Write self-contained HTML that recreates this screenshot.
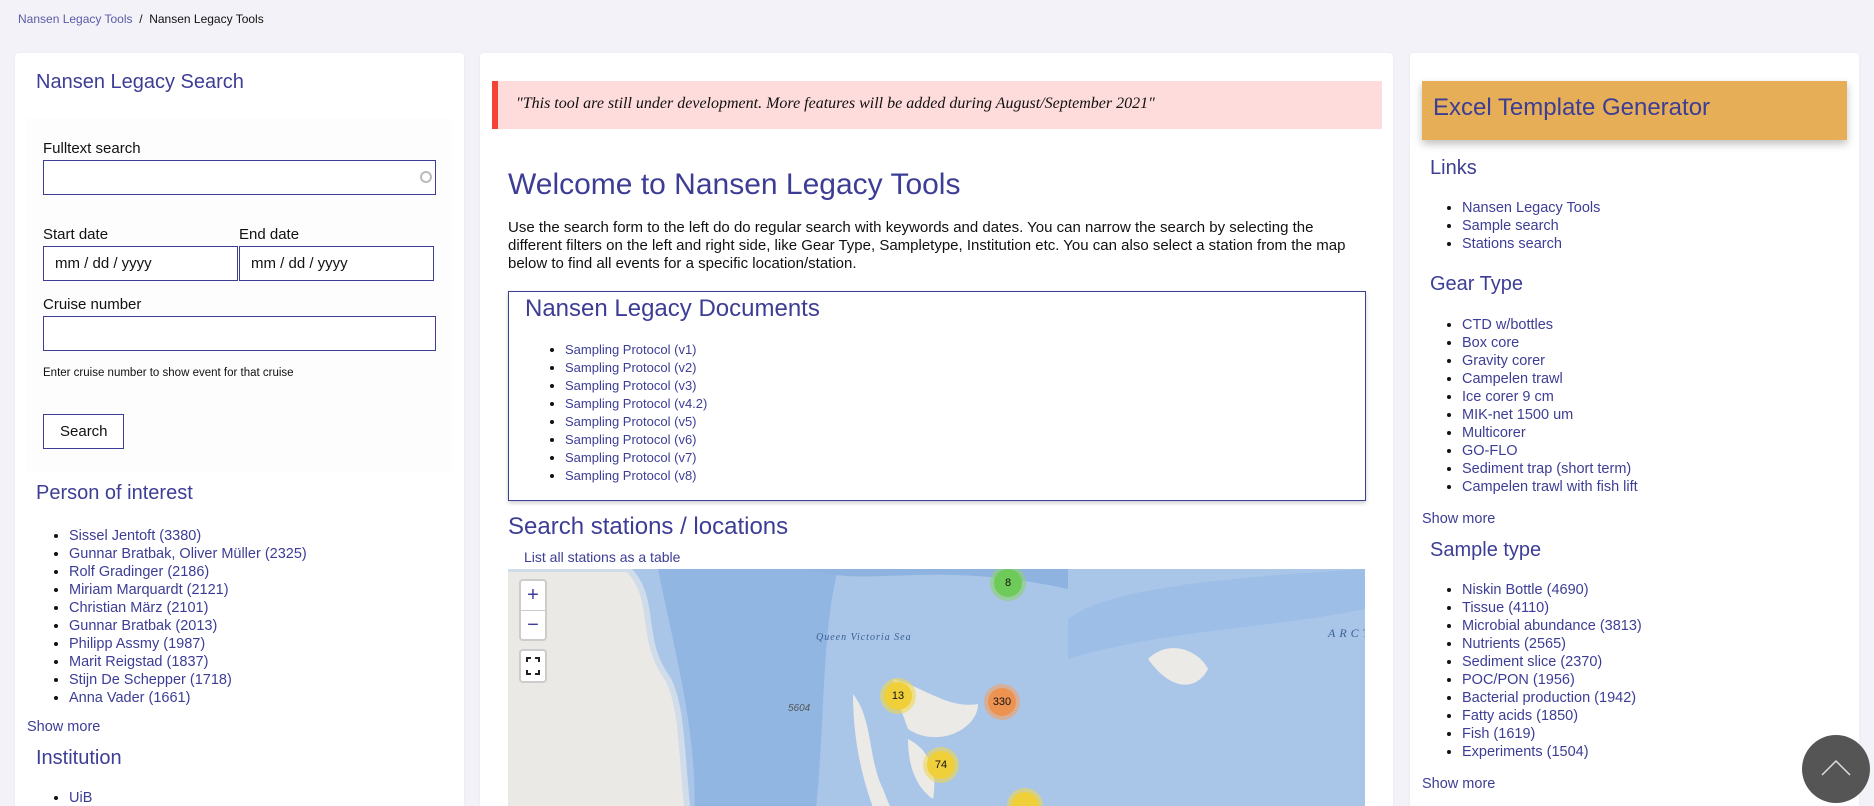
<!DOCTYPE html>
<html><head><meta charset="utf-8"><style>
*{box-sizing:border-box;margin:0;padding:0}
html,body{width:1874px;height:806px;overflow:hidden}
body{background:#f3f2f8;font-family:"Liberation Sans",sans-serif;color:#111;position:relative}
a{color:#3d3d96;text-decoration:none}
.abs{position:absolute}
.card{position:absolute;background:#fff;border-radius:4px 4px 0 0;top:53px;height:753px;overflow:hidden;box-shadow:0 0 3px rgba(0,0,0,.05)}
h2{font-weight:normal;color:#3d3d96}
ul{list-style:disc;padding-left:40px}
ul li{font-size:14.5px;line-height:18px}
.inp{position:absolute;border:1.5px solid #3d3d96;background:#fff;height:35px}
label{position:absolute;font-size:15px}
</style></head><body>
<div class="abs" style="left:18px;top:12px;font-size:12px"><a href="#" style="color:#5a5aa6">Nansen Legacy Tools</a>&nbsp;&nbsp;/&nbsp;&nbsp;<span>Nansen Legacy Tools</span></div>

<!-- left -->
<div class="card" style="left:15px;width:449px">
 <h2 class="abs" style="left:21px;top:18px;font-size:20px">Nansen Legacy Search</h2>
 <div class="abs" style="left:12px;top:65px;width:425px;height:355px;background:#fdfdfe"></div>
 <label style="left:28px;top:87px">Fulltext search</label>
 <div class="inp" style="left:28px;top:107px;width:393px"><span class="abs" style="right:3px;top:10px;width:12px;height:12px;border:2px solid #bbb;border-radius:50%"></span></div>
 <label style="left:28px;top:173px">Start date</label>
 <label style="left:224px;top:173px">End date</label>
 <div class="inp" style="left:28px;top:193px;width:195px;font-size:15px;padding:8px 11px">mm / dd / yyyy</div>
 <div class="inp" style="left:224px;top:193px;width:195px;font-size:15px;padding:8px 11px">mm / dd / yyyy</div>
 <label style="left:28px;top:243px">Cruise number</label>
 <div class="inp" style="left:28px;top:263px;width:393px"></div>
 <div class="abs" style="left:28px;top:314px;font-size:11.5px">Enter cruise number to show event for that cruise</div>
 <div class="inp" style="left:28px;top:361px;width:81px;font-size:15px;padding:8px 16px">Search</div>
 <h2 class="abs" style="left:21px;top:429px;font-size:20px">Person of interest</h2>
 <ul class="abs" style="left:14px;top:474px"><li><a>Sissel Jentoft (3380)</a></li><li><a>Gunnar Bratbak, Oliver Müller (2325)</a></li><li><a>Rolf Gradinger (2186)</a></li><li><a>Miriam Marquardt (2121)</a></li><li><a>Christian März (2101)</a></li><li><a>Gunnar Bratbak (2013)</a></li><li><a>Philipp Assmy (1987)</a></li><li><a>Marit Reigstad (1837)</a></li><li><a>Stijn De Schepper (1718)</a></li><li><a>Anna Vader (1661)</a></li></ul>
 <a class="abs" style="left:12px;top:666px;font-size:14.5px">Show more</a>
 <h2 class="abs" style="left:21px;top:694px;font-size:20px">Institution</h2>
 <ul class="abs" style="left:14px;top:736px"><li><a>UiB</a></li></ul>
</div>

<!-- center -->
<div class="card" style="left:480px;width:913px">
 <div class="abs" style="left:12px;top:28px;width:890px;height:48px;background:#fedcdb;border-left:6px solid #f44336;font-family:'Liberation Serif',serif;font-style:italic;font-size:16px;padding:14px 18px">"This tool are still under development. More features will be added during August/September 2021"</div>
 <h2 class="abs" style="left:28px;top:115px;font-size:30px">Welcome to Nansen Legacy Tools</h2>
 <p class="abs" style="left:28px;top:166px;width:860px;font-size:15px;line-height:18px">Use the search form to the left do do regular search with keywords and dates. You can narrow the search by selecting the different filters on the left and right side, like Gear Type, Sampletype, Institution etc. You can also select a station from the map below to find all events for a specific location/station.</p>
 <div class="abs" style="left:28px;top:238px;width:858px;height:210px;border:1.5px solid #3d3d96;box-shadow:0 2px 4px rgba(0,0,0,.2)">
  <h2 class="abs" style="left:16px;top:3px;font-size:24px">Nansen Legacy Documents</h2>
  <ul class="abs" style="left:16px;top:49px"><li style="font-size:13px"><a>Sampling Protocol (v1)</a></li><li style="font-size:13px"><a>Sampling Protocol (v2)</a></li><li style="font-size:13px"><a>Sampling Protocol (v3)</a></li><li style="font-size:13px"><a>Sampling Protocol (v4.2)</a></li><li style="font-size:13px"><a>Sampling Protocol (v5)</a></li><li style="font-size:13px"><a>Sampling Protocol (v6)</a></li><li style="font-size:13px"><a>Sampling Protocol (v7)</a></li><li style="font-size:13px"><a>Sampling Protocol (v8)</a></li></ul>
 </div>
 <h2 class="abs" style="left:28px;top:460px;font-size:24px">Search stations / locations</h2>
 <a class="abs" style="left:44px;top:496px;font-size:14px">List all stations as a table</a>
 <div class="abs" style="left:28px;top:516px;width:857px;height:237px;background:#a9c6e8;overflow:hidden">
  <svg width="857" height="300" style="position:absolute;left:0;top:0">
   <path d="M150 0 H330 C310 80 320 180 300 300 H180 C200 200 170 100 150 0Z" fill="#92b6e2"/>
   <path d="M0 0 H120 C150 30 130 70 160 110 C180 150 170 220 190 300 H0Z" fill="#ebe9e5"/>
   <path d="M0 0 H120 C150 30 130 70 160 110 C180 150 170 220 190 300" stroke="#d0dcea" stroke-width="6" fill="none"/>
   <path d="M345 125 C365 150 360 190 375 220 C390 260 405 280 420 300 H395 C370 260 345 200 345 125Z" fill="#eceae6"/>
   <path d="M385 110 C420 120 440 140 470 135 C470 160 430 180 400 160 C395 145 388 130 385 110Z" fill="#eceae6"/>
   <path d="M400 170 C420 180 430 200 425 230 C410 220 400 200 400 170Z" fill="#eceae6"/>
   <path d="M640 90 C660 70 690 80 700 100 C690 120 665 125 640 90Z" fill="#eceae6"/>
   <path d="M560 50 C600 20 700 10 857 0 V40 C760 60 660 60 560 90Z" fill="#9dbee6"/>
   <path d="M300 0 C360 20 420 -10 560 20 L560 0Z" fill="#8fb3e0"/>
  </svg>
  <div class="abs" style="left:308px;top:63px;font-family:'Liberation Serif',serif;font-style:italic;font-size:10px;color:#3a5f95;letter-spacing:1px">Queen Victoria Sea</div>
  <div class="abs" style="left:820px;top:57px;font-family:'Liberation Serif',serif;font-style:italic;font-size:12px;color:#3a5f95;letter-spacing:4px;white-space:nowrap">ARCT</div>
  <div class="abs" style="left:280px;top:134px;font-size:10px;font-style:italic;color:#555">5604</div>
  <div class="abs" style="left:11px;top:10px;width:28px;height:62px;background:#fff;border:2px solid rgba(0,0,0,.2);border-radius:4px;text-align:center;font-size:20px;color:#3d3d96;line-height:29px">+<div style="border-top:1px solid #ccc">−</div></div>
  <div class="abs" style="left:11px;top:80px;width:28px;height:34px;background:#fff;border:2px solid rgba(0,0,0,.2);border-radius:4px"><svg width="24" height="30"><path d="M6 11V7h4M14 7h4v4M18 19v4h-4M10 23H6v-4" stroke="#222" stroke-width="2" fill="none"/></svg></div>
  <div class="abs" style="left:482px;top:-4px;width:36px;height:36px;border-radius:50%;background:rgba(140,210,110,.6);padding:4px"><div style="width:28px;height:28px;border-radius:50%;background:#6ecb5a;text-align:center;line-height:28px;font-size:11px">8</div></div>
  <div class="abs" style="left:372px;top:109px;width:36px;height:36px;border-radius:50%;background:rgba(240,215,80,.6);padding:4px"><div style="width:28px;height:28px;border-radius:50%;background:#efcf3a;text-align:center;line-height:28px;font-size:11px">13</div></div>
  <div class="abs" style="left:476px;top:115px;width:36px;height:36px;border-radius:50%;background:rgba(245,160,100,.6);padding:4px"><div style="width:28px;height:28px;border-radius:50%;background:#ee9250;text-align:center;line-height:28px;font-size:11px">330</div></div>
  <div class="abs" style="left:415px;top:178px;width:36px;height:36px;border-radius:50%;background:rgba(240,215,80,.6);padding:4px"><div style="width:28px;height:28px;border-radius:50%;background:#efcf3a;text-align:center;line-height:28px;font-size:11px">74</div></div>
  <div class="abs" style="left:499px;top:219px;width:36px;height:36px;border-radius:50%;background:rgba(240,215,80,.6);padding:4px"><div style="width:28px;height:28px;border-radius:50%;background:#efcf3a"></div></div>
 </div>
</div>

<!-- right -->
<div class="card" style="left:1410px;width:449px">
 <div class="abs" style="left:12px;top:28px;width:425px;height:59px;background:#e6ae56;box-shadow:0 4px 8px rgba(0,0,0,.25);font-size:24px;color:#3d3d96;padding:13px 11px">Excel Template Generator</div>
 <h2 class="abs" style="left:20px;top:104px;font-size:20px">Links</h2>
 <ul class="abs" style="left:12px;top:146px"><li><a>Nansen Legacy Tools</a></li><li><a>Sample search</a></li><li><a>Stations search</a></li></ul>
 <h2 class="abs" style="left:20px;top:220px;font-size:20px">Gear Type</h2>
 <ul class="abs" style="left:12px;top:263px"><li><a>CTD w/bottles</a></li><li><a>Box core</a></li><li><a>Gravity corer</a></li><li><a>Campelen trawl</a></li><li><a>Ice corer 9 cm</a></li><li><a>MIK-net 1500 um</a></li><li><a>Multicorer</a></li><li><a>GO-FLO</a></li><li><a>Sediment trap (short term)</a></li><li><a>Campelen trawl with fish lift</a></li></ul>
 <a class="abs" style="left:12px;top:458px;font-size:14.5px">Show more</a>
 <h2 class="abs" style="left:20px;top:486px;font-size:20px">Sample type</h2>
 <ul class="abs" style="left:12px;top:528px"><li><a>Niskin Bottle (4690)</a></li><li><a>Tissue (4110)</a></li><li><a>Microbial abundance (3813)</a></li><li><a>Nutrients (2565)</a></li><li><a>Sediment slice (2370)</a></li><li><a>POC/PON (1956)</a></li><li><a>Bacterial production (1942)</a></li><li><a>Fatty acids (1850)</a></li><li><a>Fish (1619)</a></li><li><a>Experiments (1504)</a></li></ul>
 <a class="abs" style="left:12px;top:723px;font-size:14.5px">Show more</a>
</div>
<div class="abs" style="left:1802px;top:735px;width:68px;height:68px;border-radius:50%;background:#555"><svg width="68" height="68"><path d="M20 40L34 26L48 40" stroke="#ddd" stroke-width="1.5" fill="none"/></svg></div>
</body></html>
